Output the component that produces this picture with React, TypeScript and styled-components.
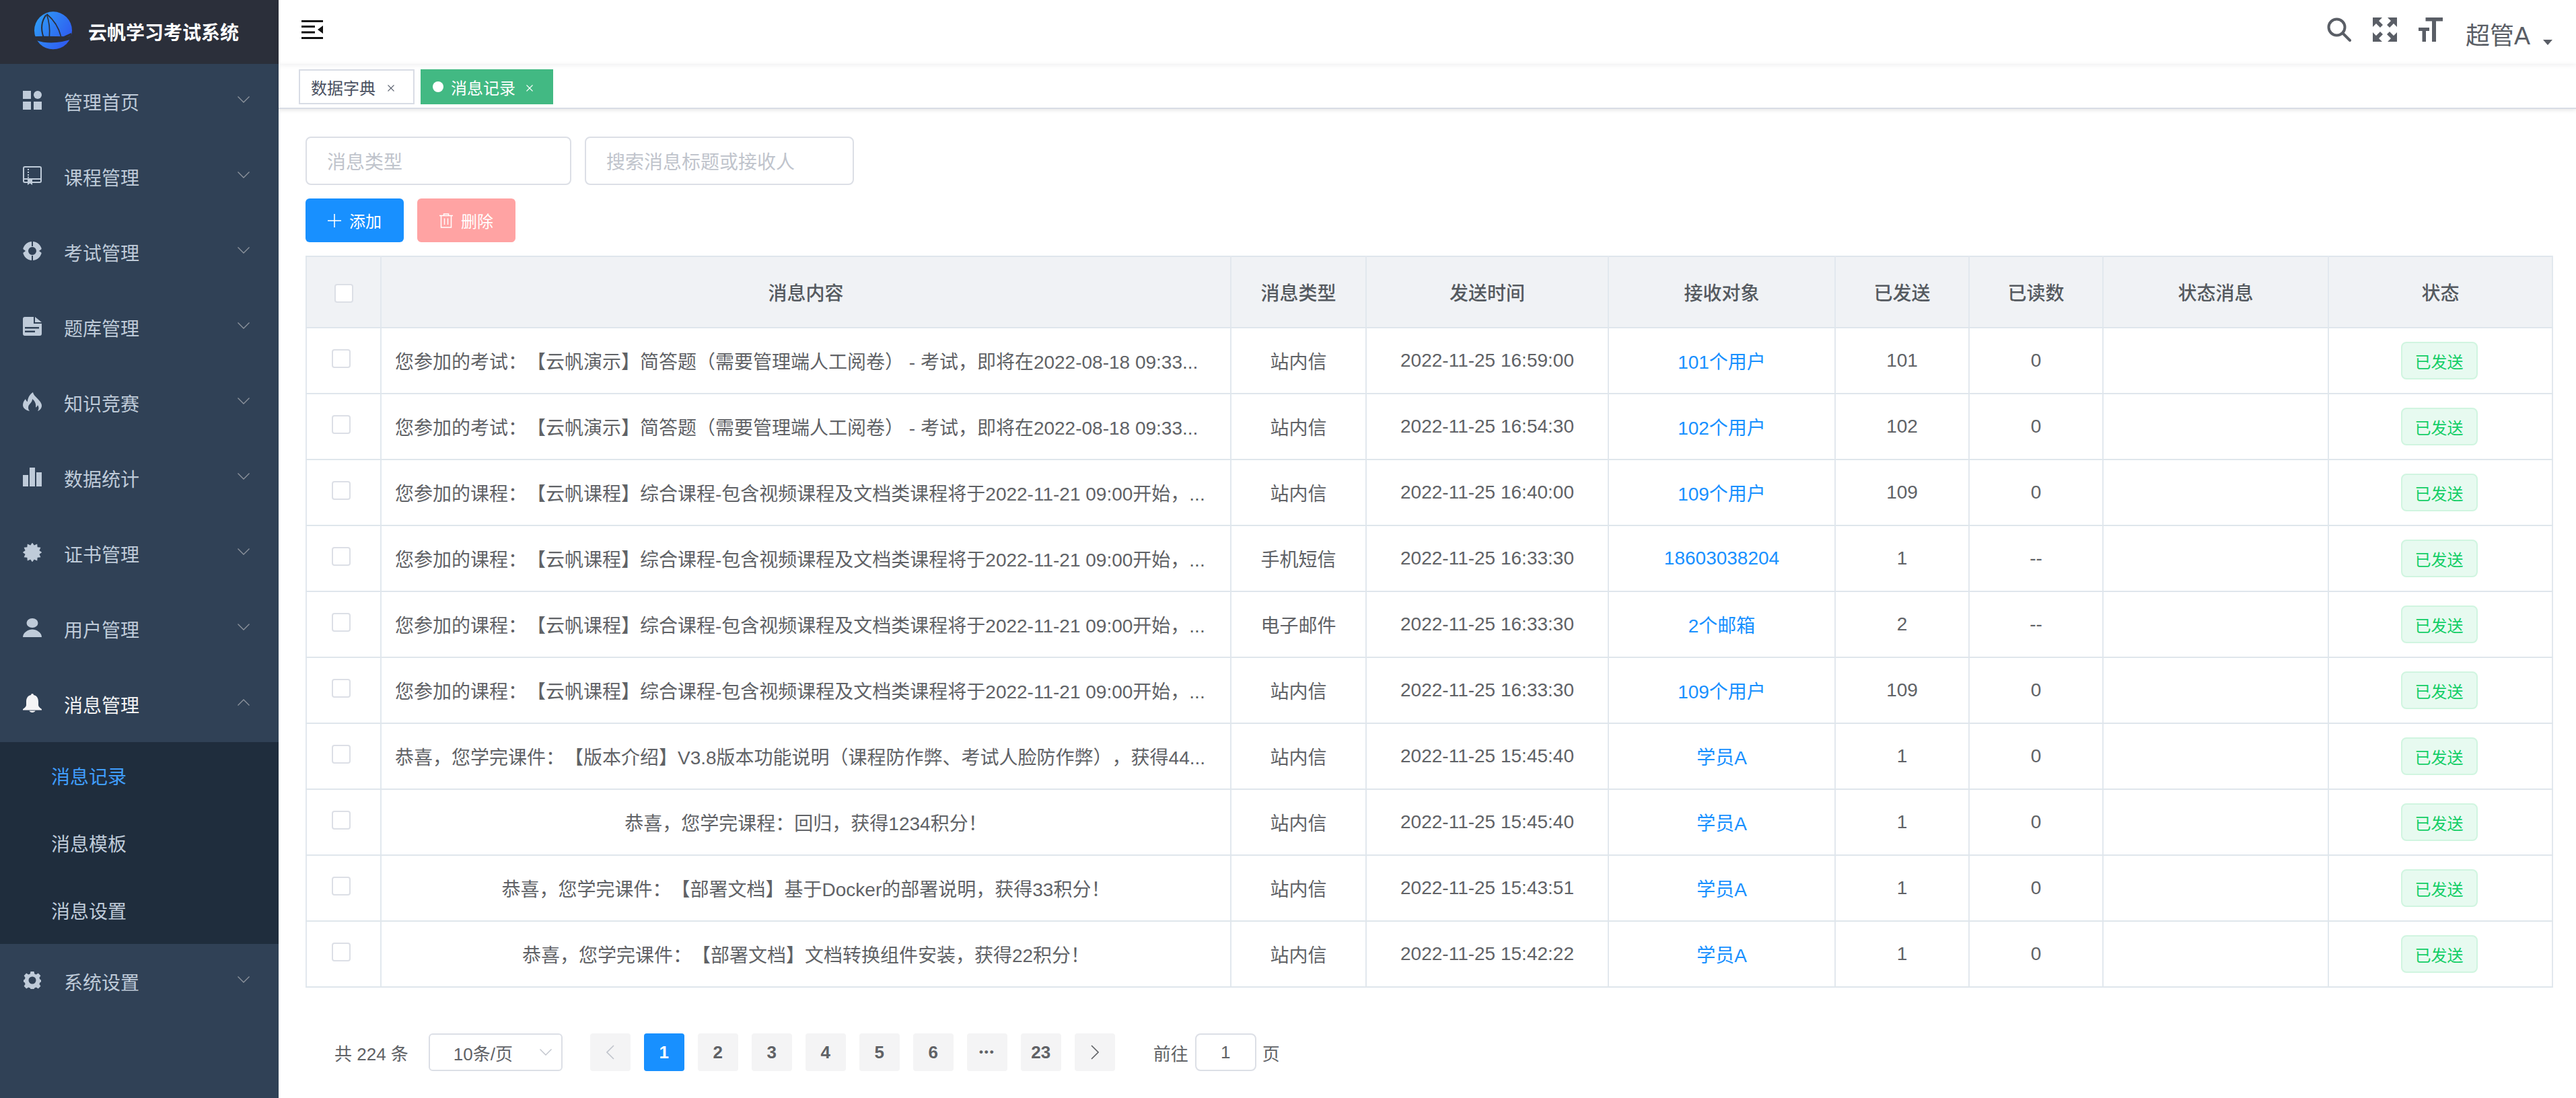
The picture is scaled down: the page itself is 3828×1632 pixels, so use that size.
import React from "react";
import styled, { createGlobalStyle } from "styled-components";

const GlobalStyle = createGlobalStyle`
  html, body {
    margin: 0;
    padding: 0;
    width: 3828px;
    height: 1632px;
    overflow: hidden;
    background: #fff;
    font-family: "Liberation Sans", "Noto Sans CJK SC", sans-serif;
    text-spacing-trim: space-all;
    -webkit-font-smoothing: antialiased;
  }
`;

const Page = styled.div`
  display: flex;
  width: 3828px;
  height: 1632px;
`;

const Sidebar = styled.aside`
  width: 414px;
  flex: none;
  background: #304156;
  color: #bfcbd9;
  font-size: 28px;
`;

const Brand = styled.div`
  height: 95px;
  background: #2b2f3a;
  display: flex;
  align-items: center;
  padding: 0 0 2px 52px;
  box-sizing: border-box;
  gap: 25px;
  color: #fff;
  font-weight: 600;
`;

const MenuRow = styled.div<{ $open?: boolean }>`
  height: 112px;
  display: flex;
  align-items: center;
  padding: 0 43px 0 34px;
  gap: 33px;
  color: ${(p) => (p.$open ? "#f4f4f5" : "#bfcbd9")};

  svg.menu-icon {
    margin-top: -4px;
    color: ${(p) => (p.$open ? "#f4f4f5" : "#bfcbd9")};
  }
`;

const Arrow = styled.svg`
  margin-left: auto;
  margin-top: -6px;
`;

const SubMenu = styled.div`
  background: #1f2d3d;
`;

const SubRow = styled.div<{ $active?: boolean }>`
  height: 100px;
  display: flex;
  align-items: center;
  padding-left: 76px;
  color: ${(p) => (p.$active ? "#409eff" : "#bfcbd9")};
`;

const Main = styled.main`
  flex: 1;
  min-width: 0;
  display: flex;
  flex-direction: column;
`;

const TopBar = styled.header`
  height: 95px;
  flex: none;
  box-sizing: border-box;
  display: flex;
  align-items: center;
  padding: 0 35px 7px 34px;
  box-shadow: 0 1px 8px rgba(0, 21, 41, 0.08);
  color: #5a5e66;
`;

const TopRight = styled.div`
  margin-left: auto;
  display: flex;
  align-items: center;
  gap: 32px;
`;

const UserName = styled.div`
  display: flex;
  align-items: center;
  margin-left: 2px;
  margin-top: 20px;
  font-size: 36px;
  line-height: 40px;
`;

const Caret = styled.span`
  width: 0;
  height: 0;
  margin: 18px 0 0 19px;
  border-left: 7px solid transparent;
  border-right: 7px solid transparent;
  border-top: 8px solid #5a5e66;
`;

const TagsBar = styled.nav`
  height: 67px;
  flex: none;
  box-sizing: border-box;
  display: flex;
  gap: 9px;
  padding: 8px 0 0 30px;
  border-bottom: 2px solid #d8dce5;
  box-shadow: 0 2px 6px rgba(0, 0, 0, 0.1);
`;

const TagItem = styled.div<{ $active?: boolean }>`
  height: 52px;
  box-sizing: border-box;
  display: flex;
  align-items: center;
  padding: 0 28px 0 16px;
  font-size: 24px;
  border: 2px solid ${(p) => (p.$active ? "#42b983" : "#d8dce5")};
  background: ${(p) => (p.$active ? "#42b983" : "#fff")};
  color: ${(p) => (p.$active ? "#fff" : "#495060")};

  svg {
    margin-left: ${(p) => (p.$active ? 16 : 18)}px;
    margin-top: 3px;
  }
`;

const TagDot = styled.span`
  width: 16px;
  height: 16px;
  border-radius: 50%;
  background: #fff;
  margin-right: 11px;
`;

const Content = styled.section`
  flex: 1;
  padding: 41px 34px 0 40px;
`;

const FilterRow = styled.div`
  display: flex;
  gap: 20px;
`;

const FilterInput = styled.div<{ $width: number }>`
  width: ${(p) => p.$width}px;
  height: 72px;
  box-sizing: border-box;
  border: 2px solid #dcdfe6;
  border-radius: 8px;
  display: flex;
  align-items: center;
  padding-left: 30px;
  font-size: 28px;
  color: #c0c4cc;
`;

const ButtonRow = styled.div`
  display: flex;
  gap: 20px;
  margin: 20px 0;
`;

const ActionButton = styled.button<{ $tone: string }>`
  width: 146px;
  height: 65px;
  border: 0;
  border-radius: 6px;
  padding: 0;
  display: flex;
  align-items: center;
  justify-content: center;
  gap: 12px;
  font-family: inherit;
  font-size: 24px;
  color: #fff;
  background: ${(p) => p.$tone};
`;

const Table = styled.table`
  width: 3338px;
  table-layout: fixed;
  border-collapse: collapse;
  color: #606266;
  font-size: 28px;

  th,
  td {
    padding: 0;
    text-align: center;
    border: 2px solid #e2e8ee;
    border-top-color: #dfe6ec;
    border-bottom-color: #dfe6ec;
  }

  th {
    height: 104px;
    background: #f0f2f5;
    font-weight: 500;
    color: #555a60;
  }

  td {
    height: 96px;
  }
`;

const MessageText = styled.div<{ $long: boolean }>`
  padding: 0 20px;
  white-space: nowrap;
  text-align: ${(p) => (p.$long ? "left" : "center")};
`;

const CheckBox = styled.span<{ $body?: boolean }>`
  display: inline-block;
  vertical-align: middle;
  width: 28px;
  height: 28px;
  box-sizing: border-box;
  border: 2px solid #dcdfe6;
  border-radius: 4px;
  background: #fff;
  margin-right: ${(p) => (p.$body ? 8 : 0)}px;
  margin-bottom: ${(p) => (p.$body ? 6 : 0)}px;
`;

const LinkText = styled.span`
  color: #1890ff;
`;

const StatusTag = styled.span`
  display: inline-flex;
  align-items: center;
  justify-content: center;
  width: 114px;
  height: 56px;
  box-sizing: border-box;
  margin-right: 4px;
  border: 2px solid #d0f5e0;
  border-radius: 8px;
  background: #e7faf0;
  color: #13ce66;
  font-size: 24px;
  vertical-align: middle;
`;

const Pager = styled.div`
  display: flex;
  align-items: center;
  margin-top: 68px;
  padding-left: 43px;
  font-size: 26px;
  color: #606266;
`;

const SizeSelect = styled.div`
  width: 199px;
  height: 56px;
  box-sizing: border-box;
  margin: 0 41px 0 30px;
  border: 2px solid #dcdfe6;
  border-radius: 6px;
  display: flex;
  align-items: center;
  padding: 0 14px 0 35px;
  justify-content: space-between;
`;

const PageList = styled.div`
  display: flex;
  gap: 20px;
`;

const PageButton = styled.div<{ $active?: boolean; $dots?: boolean }>`
  width: 60px;
  height: 56px;
  border-radius: 4px;
  display: flex;
  align-items: center;
  justify-content: center;
  font-weight: 700;
  font-size: ${(p) => (p.$dots ? 17 : 26)}px;
  letter-spacing: ${(p) => (p.$dots ? 2 : 0)}px;
  background: ${(p) => (p.$active ? "#1890ff" : "#f4f4f5")};
  color: ${(p) => (p.$active ? "#fff" : "#606266")};
`;

const JumpLabel = styled.span`
  margin-left: 57px;
`;

const JumpInput = styled.div`
  width: 91px;
  height: 56px;
  box-sizing: border-box;
  margin: 0 9px 0 10px;
  border: 2px solid #dcdfe6;
  border-radius: 8px;
  display: flex;
  align-items: center;
  justify-content: center;
`;

const SIDEBAR_BG = "#304156";
const BADGE_POINTS = Array.from({ length: 24 }, (_, i) => {
  const r = i % 2 ? 10.8 : 14.4;
  const a = (i / 24) * Math.PI * 2;
  return `${14 + r * Math.cos(a)},${14 + r * Math.sin(a)}`;
}).join(" ");

const Icon = ({ children }: { children: React.ReactNode }) => (
  <svg className="menu-icon" width="28" height="28" viewBox="0 0 28 28" fill="currentColor">
    {children}
  </svg>
);

const menuIcons: Record<string, React.ReactNode> = {
  dashboard: (
    <>
      <rect x="0" y="0" width="12" height="12" />
      <circle cx="22" cy="6" r="6" />
      <rect x="0" y="16" width="12" height="12" />
      <rect x="16" y="16" width="12" height="12" />
    </>
  ),
  book: (
    <>
      <rect x="1" y="1" width="26" height="23" rx="2" fill="none" stroke="currentColor" strokeWidth="2" />
      <rect x="1" y="18" width="26" height="2" />
      <rect x="7" y="4" width="2" height="2" />
      <rect x="7" y="8" width="2" height="2" />
      <rect x="7" y="12" width="2" height="2" />
      <rect x="7" y="15.5" width="2" height="2" />
      <polygon points="7,20 14,20 14,28 10.5,25.5 7,28" />
    </>
  ),
  exam: (
    <>
      <circle cx="14" cy="14" r="10" fill="none" stroke="currentColor" strokeWidth="8" />
      <rect x="13" y="0" width="2" height="7" fill={SIDEBAR_BG} />
      <rect x="13" y="21" width="2" height="7" fill={SIDEBAR_BG} />
      <polygon points="0,11 4,14 0,17" fill={SIDEBAR_BG} />
      <polygon points="28,11 24,14 28,17" fill={SIDEBAR_BG} />
    </>
  ),
  file: (
    <>
      <path d="M3 0H16V10H28V25a3 3 0 0 1-3 3H3a3 3 0 0 1-3-3V3a3 3 0 0 1 3-3Z" />
      <polygon points="18,0 28,8 18,8" />
      <rect x="3" y="15" width="21" height="2.5" fill={SIDEBAR_BG} />
      <rect x="3" y="20.5" width="15" height="2.5" fill={SIDEBAR_BG} />
    </>
  ),
  fire: (
    <path d="M15 0C16 5 20 7 24 12C27 15 28 18 28 20C28 24 25 27 22 28C24 25 24 22 22 19C21.5 21 20.5 22 19 22.5C20 18 18 13 14 10C14 15 10 17 8.5 20C7.5 23 8 26 10 28C5 27 0 24 0 19C0 15 2 12 4 10C4.5 12 5.5 13.5 7 14C7 9 10 3 15 0Z" />
  ),
  chart: (
    <>
      <rect x="0" y="11" width="8" height="17" />
      <rect x="10" y="0" width="8" height="28" />
      <rect x="20" y="7" width="8" height="21" />
    </>
  ),
  badge: <polygon points={BADGE_POINTS} />,
  user: (
    <>
      <ellipse cx="14" cy="7" rx="8.5" ry="7" />
      <path d="M0 28C0 21 8 16.5 14 16.5C20 16.5 28 21 28 28Z" />
    </>
  ),
  bell: (
    <path d="M14 0a2 2 0 0 1 2 2C21 3 23 7 23 12V17C23 19 25 21 28 23V24.5H0V23C3 21 5 19 5 17V12C5 7 7 3 12 2a2 2 0 0 1 2-2ZM9.5 25.5H18.5C18 27 16 28 14 28C12 28 10 27 9.5 25.5Z" />
  ),
  gear: (
    <path
      fillRule="evenodd"
      d="M11.5 1H16.5L17.3 4.6L19.7 5.6L22.8 3.6L26.4 7.2L24.4 10.3L25.4 12.7L27 13.5V16.5L25.4 17.3L24.4 19.7L26.4 22.8L22.8 26.4L19.7 24.4L17.3 25.4L16.5 27H11.5L10.7 25.4L8.3 24.4L5.2 26.4L1.6 22.8L3.6 19.7L2.6 17.3L1 16.5V13.5L2.6 12.7L3.6 10.3L1.6 7.2L5.2 3.6L8.3 5.6L10.7 4.6ZM14 8.5a5.5 5.5 0 1 0 0 11a5.5 5.5 0 0 0 0-11Z"
    />
  ),
};

const Chevron = ({ up }: { up?: boolean }) => (
  <Arrow width="18" height="10" viewBox="0 0 18 10" fill="none" stroke="#8f959e" strokeWidth="1.3">
    <polyline points={up ? "0.5,9.5 9,1 17.5,9.5" : "0.5,0.5 9,9 17.5,0.5"} />
  </Arrow>
);

const Logo = () => (
  <svg width="80" height="72" viewBox="0 0 240 216" style={{ margin: "0 -13px" }}>
    <defs>
      <linearGradient id="logoFill" x1="0" y1="0" x2="1" y2="0.6">
        <stop offset="0" stopColor="#2fa3f7" />
        <stop offset="1" stopColor="#2f5cf0" />
      </linearGradient>
    </defs>
    <circle cx="120" cy="103" r="84" fill="url(#logoFill)" />
    <path d="M28 130L75 128L190 130L212 118V138Q120 172 44 147L28 150Z" fill="#2b2f3a" />
    <path d="M88 34Q58 75 76 130" fill="none" stroke="#2b2f3a" strokeWidth="6" />
    <path d="M91 30Q108 80 103 132" fill="none" stroke="#2b2f3a" strokeWidth="5" />
    <path d="M92 30Q140 70 155 130" fill="none" stroke="#2b2f3a" strokeWidth="5" />
    <path d="M166 130L200 114L204 124L176 134Z" fill="#2b2f3a" />
  </svg>
);

const Hamburger = () => (
  <svg width="32" height="28" viewBox="0 0 32 28" fill="#111">
    <rect x="0" y="0" width="32" height="3" />
    <rect x="0" y="8" width="20" height="3" />
    <rect x="0" y="16.5" width="20" height="3" />
    <rect x="0" y="25" width="32" height="3" />
    <polygon points="24,14 32,8 32,20" />
  </svg>
);

const SearchIcon = () => (
  <svg width="36" height="36" viewBox="0 0 36 36" fill="none" stroke="currentColor" strokeWidth="4" strokeLinecap="round">
    <circle cx="14.5" cy="14.5" r="12" />
    <line x1="24" y1="24" x2="34" y2="34" />
  </svg>
);

const corner = "0,0 14,0 9,5 15,11 11,15 5,9 0,14";
const FullscreenIcon = () => (
  <svg width="36" height="36" viewBox="0 0 36 36" fill="currentColor">
    <polygon points={corner} />
    <polygon points={corner} transform="matrix(-1 0 0 1 36 0)" />
    <polygon points={corner} transform="matrix(1 0 0 -1 0 36)" />
    <polygon points={corner} transform="matrix(-1 0 0 -1 36 36)" />
  </svg>
);

const SizeIcon = () => (
  <svg width="36" height="36" viewBox="0 0 36 36" fill="currentColor">
    <rect x="10.5" y="0" width="25.5" height="5.5" />
    <rect x="20" y="0" width="6" height="36" />
    <rect x="0" y="15" width="16" height="5" />
    <rect x="5.5" y="15" width="5.5" height="21" />
  </svg>
);

const CloseMark = ({ color }: { color: string }) => (
  <svg width="10" height="10" viewBox="0 0 10 10" stroke={color} strokeWidth="1.1">
    <line x1="0.5" y1="0.5" x2="9.5" y2="9.5" />
    <line x1="9.5" y1="0.5" x2="0.5" y2="9.5" />
  </svg>
);

const PlusIcon = () => (
  <svg width="20" height="20" viewBox="0 0 20 20" stroke="#fff" strokeWidth="1.6">
    <line x1="10" y1="0" x2="10" y2="20" />
    <line x1="0" y1="10" x2="20" y2="10" />
  </svg>
);

const TrashIcon = () => (
  <svg width="20" height="22" viewBox="0 0 20 22" fill="none" stroke="#fff" strokeWidth="1.5">
    <path d="M0 3.5H20M6.5 3.5V1H13.5V3.5M2.5 3.5V21H17.5V3.5M7.5 7.5V17M12.5 7.5V17" />
  </svg>
);

const PageArrow = ({ dir, color }: { dir: "left" | "right"; color: string }) => (
  <svg width="12" height="22" viewBox="0 0 12 22" fill="none" stroke={color} strokeWidth="1.6">
    <polyline points={dir === "left" ? "11,1 1,11 11,21" : "1,1 11,11 1,21"} />
  </svg>
);

const menus = [
  { key: "dashboard", label: "管理首页" },
  { key: "book", label: "课程管理" },
  { key: "exam", label: "考试管理" },
  { key: "file", label: "题库管理" },
  { key: "fire", label: "知识竞赛" },
  { key: "chart", label: "数据统计" },
  { key: "badge", label: "证书管理" },
  { key: "user", label: "用户管理" },
];

const EXAM_MSG = "您参加的考试：【云帆演示】简答题（需要管理端人工阅卷） - 考试，即将在2022-08-18 09:33...";
const COURSE_MSG = "您参加的课程：【云帆课程】综合课程-包含视频课程及文档类课程将于2022-11-21 09:00开始，...";

const rows = [
  { msg: EXAM_MSG, type: "站内信", time: "2022-11-25 16:59:00", target: "101个用户", sent: "101", read: "0" },
  { msg: EXAM_MSG, type: "站内信", time: "2022-11-25 16:54:30", target: "102个用户", sent: "102", read: "0" },
  { msg: COURSE_MSG, type: "站内信", time: "2022-11-25 16:40:00", target: "109个用户", sent: "109", read: "0" },
  { msg: COURSE_MSG, type: "手机短信", time: "2022-11-25 16:33:30", target: "18603038204", sent: "1", read: "--" },
  { msg: COURSE_MSG, type: "电子邮件", time: "2022-11-25 16:33:30", target: "2个邮箱", sent: "2", read: "--" },
  { msg: COURSE_MSG, type: "站内信", time: "2022-11-25 16:33:30", target: "109个用户", sent: "109", read: "0" },
  { msg: "恭喜，您学完课件：【版本介绍】V3.8版本功能说明（课程防作弊、考试人脸防作弊），获得44...", type: "站内信", time: "2022-11-25 15:45:40", target: "学员A", sent: "1", read: "0" },
  { msg: "恭喜，您学完课程：回归，获得1234积分！", type: "站内信", time: "2022-11-25 15:45:40", target: "学员A", sent: "1", read: "0" },
  { msg: "恭喜，您学完课件：【部署文档】基于Docker的部署说明，获得33积分！", type: "站内信", time: "2022-11-25 15:43:51", target: "学员A", sent: "1", read: "0" },
  { msg: "恭喜，您学完课件：【部署文档】文档转换组件安装，获得22积分！", type: "站内信", time: "2022-11-25 15:42:22", target: "学员A", sent: "1", read: "0" },
];

const columns = [111, 1263, 201, 360, 337, 199, 199, 335, 333];
const headers = ["消息内容", "消息类型", "发送时间", "接收对象", "已发送", "已读数", "状态消息", "状态"];
const pages = ["1", "2", "3", "4", "5", "6", "•••", "23"];

export default function App() {
  return (
    <Page>
      <GlobalStyle />
      <Sidebar>
        <Brand>
          <Logo />
          <span>云帆学习考试系统</span>
        </Brand>
        {menus.map((m) => (
          <MenuRow key={m.key}>
            <Icon>{menuIcons[m.key]}</Icon>
            <span>{m.label}</span>
            <Chevron />
          </MenuRow>
        ))}
        <MenuRow $open>
          <Icon>{menuIcons.bell}</Icon>
          <span>消息管理</span>
          <Chevron up />
        </MenuRow>
        <SubMenu>
          <SubRow $active>消息记录</SubRow>
          <SubRow>消息模板</SubRow>
          <SubRow>消息设置</SubRow>
        </SubMenu>
        <MenuRow>
          <Icon>{menuIcons.gear}</Icon>
          <span>系统设置</span>
          <Chevron />
        </MenuRow>
      </Sidebar>
      <Main>
        <TopBar>
          <Hamburger />
          <TopRight>
            <SearchIcon />
            <FullscreenIcon />
            <SizeIcon />
            <UserName>
              超管A
              <Caret />
            </UserName>
          </TopRight>
        </TopBar>
        <TagsBar>
          <TagItem>
            数据字典
            <CloseMark color="#5f6673" />
          </TagItem>
          <TagItem $active>
            <TagDot />
            消息记录
            <CloseMark color="#fff" />
          </TagItem>
        </TagsBar>
        <Content>
          <FilterRow>
            <FilterInput $width={395}>消息类型</FilterInput>
            <FilterInput $width={400}>搜索消息标题或接收人</FilterInput>
          </FilterRow>
          <ButtonRow>
            <ActionButton $tone="#1890ff">
              <PlusIcon />
              添加
            </ActionButton>
            <ActionButton $tone="#ffa3a3">
              <TrashIcon />
              删除
            </ActionButton>
          </ButtonRow>
          <Table>
            <colgroup>
              {columns.map((w, i) => (
                <col key={i} style={{ width: w }} />
              ))}
            </colgroup>
            <thead>
              <tr>
                <th>
                  <CheckBox />
                </th>
                {headers.map((h) => (
                  <th key={h}>{h}</th>
                ))}
              </tr>
            </thead>
            <tbody>
              {rows.map((r, i) => (
                <tr key={i}>
                  <td>
                    <CheckBox $body />
                  </td>
                  <td>
                    <MessageText $long={r.msg.endsWith("...")}>{r.msg}</MessageText>
                  </td>
                  <td>{r.type}</td>
                  <td>{r.time}</td>
                  <td>
                    <LinkText>{r.target}</LinkText>
                  </td>
                  <td>{r.sent}</td>
                  <td>{r.read}</td>
                  <td />
                  <td>
                    <StatusTag>已发送</StatusTag>
                  </td>
                </tr>
              ))}
            </tbody>
          </Table>
          <Pager>
            <span>共 224 条</span>
            <SizeSelect>
              10条/页
              <svg width="18" height="10" viewBox="0 0 18 10" fill="none" stroke="#c0c4cc" strokeWidth="1.4">
                <polyline points="0.5,0.5 9,9 17.5,0.5" />
              </svg>
            </SizeSelect>
            <PageList>
              <PageButton>
                <PageArrow dir="left" color="#c0c4cc" />
              </PageButton>
              {pages.map((p, i) => (
                <PageButton key={i} $active={p === "1"} $dots={p === "•••"}>
                  {p}
                </PageButton>
              ))}
              <PageButton>
                <PageArrow dir="right" color="#606266" />
              </PageButton>
            </PageList>
            <JumpLabel>前往</JumpLabel>
            <JumpInput>1</JumpInput>
            <span>页</span>
          </Pager>
        </Content>
      </Main>
    </Page>
  );
}
